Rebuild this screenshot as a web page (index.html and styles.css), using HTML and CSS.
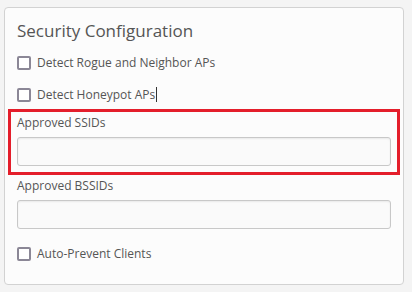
FILE: index.html
```html
<!DOCTYPE html>
<html lang="en">
<head>
  <meta charset="UTF-8">
  <meta name="viewport" content="width=device-width, initial-scale=1.0">
  <title>Security Configuration</title>
  <link rel="stylesheet" href="styles.css">
</head>
<body>
  <section class="panel">
    <h2 class="panel-title">Security Configuration</h2>

    <label class="check-row">
      <span class="check-box"></span>
      <span>Detect Rogue and Neighbor APs</span>
    </label>
    <label class="check-row row-second">
      <span class="check-box"></span>
      <span>Detect Honeypot APs<span class="caret"></span></span>
    </label>

    <div class="field field-highlight">
      <label class="field-label" for="ssids">Approved SSIDs</label>
      <input class="field-input" type="text" id="ssids">
    </div>
    <div class="field">
      <label class="field-label" for="bssids">Approved BSSIDs</label>
      <input class="field-input" type="text" id="bssids">
    </div>

    <label class="check-row row-last">
      <span class="check-box"></span>
      <span>Auto-Prevent Clients</span>
    </label>
  </section>
</body>
</html>
```

FILE: styles.css
```css
/* Reset */
* {
  margin: 0;
  padding: 0;
  box-sizing: border-box;
}

body {
  font-family: 'Open Sans', 'Liberation Sans', sans-serif;
  background: #f4f4f4;
  color: #555;
  padding: 7px 8px 8px 4px;
}

/* Panel */
.panel {
  background: #fcfcfc;
  border: 1px solid #d2d2d2;
  border-radius: 4px;
  padding: 11px 12px 22px 12px;
  display: flex;
  flex-direction: column;
}

.panel-title {
  font-size: 17px;
  font-weight: 400;
  line-height: 24px;
  color: #555;
  margin-bottom: 12px;
}

/* Checkboxes */
.check-row {
  display: flex;
  align-items: center;
  gap: 6px;
  font-size: 12px;
  line-height: 16px;
}

.row-second {
  margin-top: 16px;
}

.row-last {
  margin-top: 17px;
}

.check-box {
  width: 14px;
  height: 14px;
  border: 2px solid #8b8796;
  border-radius: 2px;
  background: #fff;
  flex-shrink: 0;
}

.caret {
  display: inline-block;
  width: 1px;
  height: 15px;
  background: #333;
  margin-left: 1px;
  vertical-align: -3px;
}

/* Fields */
.field {
  display: flex;
  flex-direction: column;
  gap: 5px;
  margin-top: 11px;
}

.field-label {
  font-size: 12px;
  line-height: 18px;
}

.field-input {
  height: 29px;
  border: 1px solid #c8c8c8;
  border-radius: 3px;
  background: #fafafa;
  box-shadow: inset 0 1px 2px rgba(0, 0, 0, 0.07);
  font: inherit;
}

.field-highlight {
  position: relative;
}

.field-highlight::after {
  content: "";
  position: absolute;
  top: -5px;
  right: -9px;
  bottom: -9px;
  left: -9px;
  border: 3px solid #e41e2b;
  pointer-events: none;
}
```
